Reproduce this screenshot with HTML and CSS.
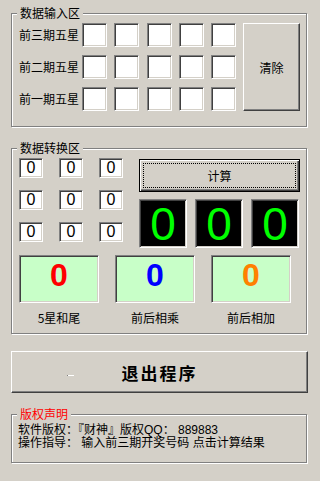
FILE: index.html
```html
<!DOCTYPE html>
<html lang="zh-CN">
<head>
<meta charset="utf-8">
<title>财神</title>
<link rel="stylesheet" href="styles.css">
</head>
<body>
<div class="group group-input">
  <span class="legend">数据输入区</span>
  <div class="input-body">
    <div class="rows">
      <div class="row">
        <span class="row-label">前三期五星</span>
        <div class="cells">
          <span class="edit"></span><span class="edit"></span><span class="edit"></span><span class="edit"></span><span class="edit"></span>
        </div>
      </div>
      <div class="row">
        <span class="row-label">前二期五星</span>
        <div class="cells">
          <span class="edit"></span><span class="edit"></span><span class="edit"></span><span class="edit"></span><span class="edit"></span>
        </div>
      </div>
      <div class="row">
        <span class="row-label">前一期五星</span>
        <div class="cells">
          <span class="edit"></span><span class="edit"></span><span class="edit"></span><span class="edit"></span><span class="edit"></span>
        </div>
      </div>
    </div>
    <div class="btn btn-clear">清除</div>
  </div>
</div>

<div class="group group-convert">
  <span class="legend">数据转换区</span>
  <div class="convert-top">
    <div class="small-grid">
      <span class="small">0</span><span class="small">0</span><span class="small">0</span>
      <span class="small">0</span><span class="small">0</span><span class="small">0</span>
      <span class="small">0</span><span class="small">0</span><span class="small">0</span>
    </div>
    <div class="right-col">
      <div class="btn-default"><span class="focus">计算</span></div>
      <div class="lcd-row">
        <span class="lcd">0</span><span class="lcd">0</span><span class="lcd">0</span>
      </div>
    </div>
  </div>
  <div class="result-row">
    <div class="result">
      <span class="result-box red">0</span>
      <span class="result-label">5星和尾</span>
    </div>
    <div class="result">
      <span class="result-box blue">0</span>
      <span class="result-label">前后相乘</span>
    </div>
    <div class="result">
      <span class="result-box orange">0</span>
      <span class="result-label">前后相加</span>
    </div>
  </div>
</div>

<div class="btn btn-exit">退出程序<span class="mark"></span></div>

<div class="group group-info">
  <span class="legend legend-red">版权声明</span>
  <div class="info-line">软件版权：『财神』版权QQ： 889883</div>
  <div class="info-line">操作指导： 输入前三期开奖号码 点击计算结果</div>
</div>
</body>
</html>
```

FILE: styles.css
```css
html, body {
  margin: 0;
  background: #d4d0c8;
}
body {
  width: 318px;
  height: 481px;
  box-sizing: border-box;
  padding: 13px 0 0 11px;
  overflow: hidden;
  font-family: "Noto Sans CJK SC", "Liberation Sans", sans-serif;
  font-size: 12px;
  color: #000;
}

.group {
  position: relative;
  box-sizing: border-box;
  width: 296px;
  border: 1px solid #808080;
  box-shadow: inset 1px 1px 0 #fff, 1px 1px 0 #fff;
}
.legend {
  position: absolute;
  left: 5px;
  top: -8px;
  height: 14px;
  line-height: 14px;
  padding: 0 3px;
  background: #d4d0c8;
}
.legend-red { color: #ff0000; }

/* input group */
.group-input {
  height: 114px;
  padding: 9px 0 0 7px;
}
.input-body { display: flex; }
.rows {
  display: flex;
  flex-direction: column;
  gap: 8px;
}
.row {
  display: flex;
  align-items: center;
  height: 24px;
}
.row-label {
  width: 63px;
  line-height: 14px;
}
.cells {
  display: grid;
  grid-template-columns: repeat(5, 25px);
  column-gap: 7.25px;
}
.edit, .small, .lcd, .result-box {
  box-sizing: border-box;
  border: 1px solid;
  border-color: #808080 #fff #fff #808080;
  box-shadow: inset 1px 1px 0 #404040, inset -1px -1px 0 #d4d0c8;
}
.edit {
  display: block;
  width: 25px;
  height: 24px;
  background: #fff;
}

.btn {
  box-sizing: border-box;
  display: flex;
  align-items: center;
  justify-content: center;
  background: #d4d0c8;
  border: 1px solid;
  border-color: #fff #404040 #404040 #fff;
  box-shadow: inset -1px -1px 0 #808080;
}
.btn-clear {
  margin-left: 7px;
  width: 57px;
  height: 88px;
}

/* convert group */
.group-convert {
  margin-top: 21px;
  height: 186px;
  padding: 9px 0 0 7px;
}
.convert-top { display: flex; }
.small-grid {
  display: grid;
  grid-template-columns: repeat(3, 24px);
  grid-auto-rows: 20px;
  column-gap: 16px;
  row-gap: 12px;
}
.small {
  display: flex;
  align-items: center;
  justify-content: center;
  background: #fff;
  font-family: "Liberation Sans", sans-serif;
  font-size: 16px;
  line-height: 1;
}
.right-col {
  margin: 1px 0 0 16px;
  display: flex;
  flex-direction: column;
  gap: 7px;
}
.btn-default {
  box-sizing: border-box;
  width: 161px;
  height: 33px;
  display: flex;
  padding: 3px;
  border: 1px solid #000;
  background: #d4d0c8;
  box-shadow: inset 1px 1px 0 #fff, inset -1px -1px 0 #404040, inset -2px -2px 0 #808080;
}
.focus {
  flex: 1;
  display: flex;
  align-items: center;
  justify-content: center;
  border: 1px dotted #000;
}
.lcd-row {
  display: flex;
  gap: 8px;
}
.lcd {
  display: flex;
  align-items: center;
  justify-content: center;
  width: 48px;
  height: 49px;
  background: #000;
  color: #00ff00;
  font-family: "Liberation Sans", sans-serif;
  font-size: 46px;
  line-height: 1;
}
.result-row {
  margin-top: 7px;
  display: flex;
  gap: 16px;
}
.result {
  display: flex;
  flex-direction: column;
  align-items: center;
  width: 80px;
}
.result-box {
  display: flex;
  align-items: center;
  justify-content: center;
  width: 80px;
  height: 48px;
  padding-bottom: 8px;
  background: #c8ffc8;
  font-family: "Liberation Sans", sans-serif;
  font-weight: bold;
  font-size: 32px;
  line-height: 1;
}
.red { color: #ff0000; }
.blue { color: #0000ff; }
.orange { color: #ff8000; }
.result-label {
  margin-top: 8px;
  line-height: 14px;
}

/* exit button */
.btn-exit {
  position: relative;
  margin-top: 17px;
  width: 297px;
  height: 42px;
  font-size: 17px;
  font-weight: bold;
  letter-spacing: 2px;
}
.mark {
  position: absolute;
  left: 55px;
  top: 23px;
  width: 6px;
  height: 1px;
  background: #fff;
  border-left: 1px solid #808080;
}

/* info group */
.group-info {
  margin-top: 21px;
  height: 49px;
  padding: 9px 0 0 6px;
  display: flex;
  flex-direction: column;
}
.info-line {
  height: 13px;
  line-height: 13px;
  white-space: nowrap;
  font-family: "Liberation Sans", "Noto Sans CJK SC", sans-serif;
  font-size: 12px;
}
```
